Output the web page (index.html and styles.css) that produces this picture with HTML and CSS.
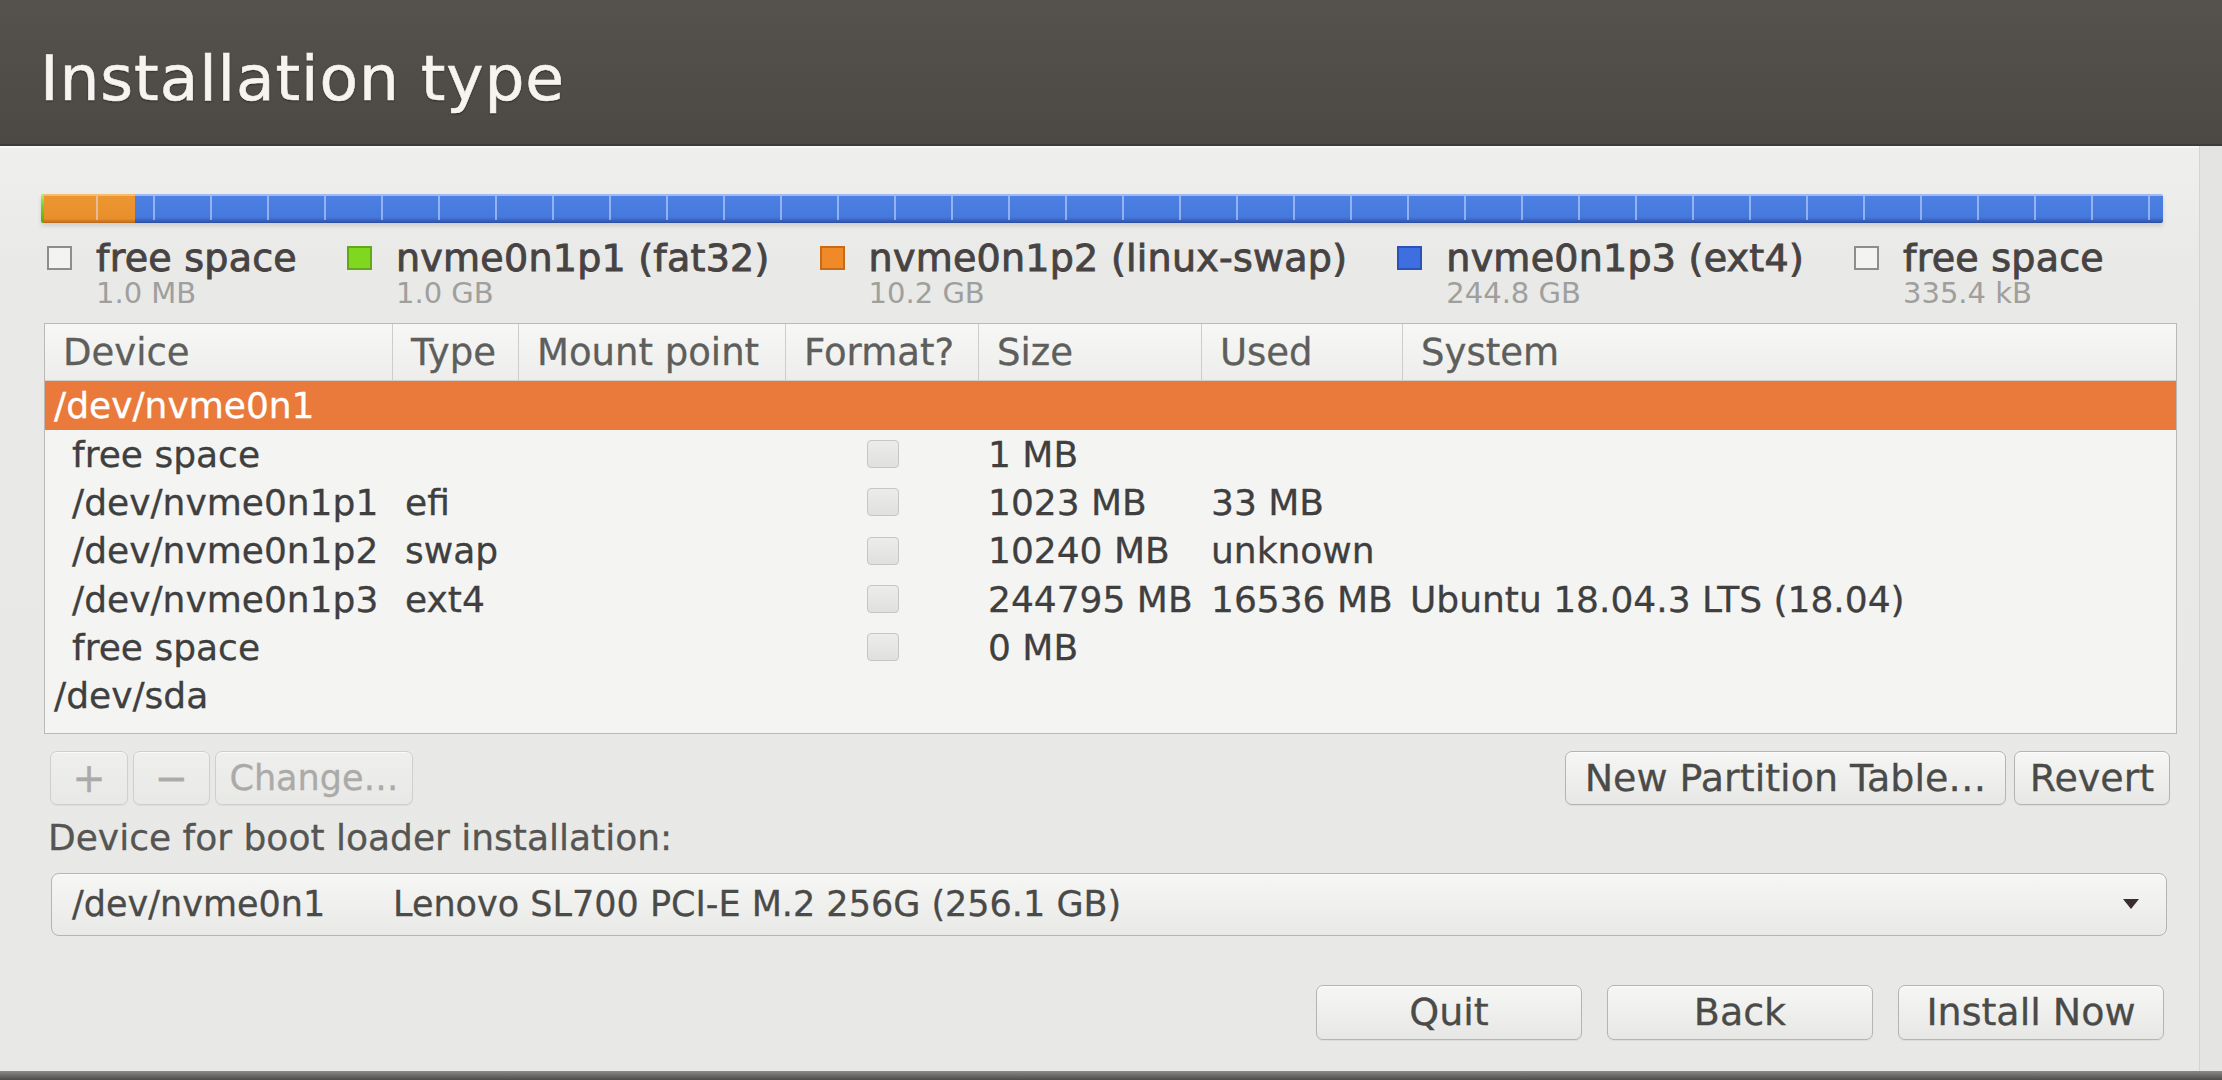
FILE: index.html
```html
<!DOCTYPE html>
<html lang="en">
<head>
<meta charset="utf-8">
<title>Installation type</title>
<link rel="stylesheet" href="styles.css">
</head>
<body>
<div class="page">
  <header class="titlebar"><h1 class="title">Installation type</h1></header>
  <div class="main">
    <section class="window">
      <div class="partbar">
        <div class="seg seg-efi"></div>
        <div class="seg seg-swap"></div>
        <div class="seg seg-root"></div>
      </div>

      <div class="legend">
        <div class="legend-item">
          <span class="swatch swatch-free"></span>
          <div class="legend-text"><span class="legend-name">free space</span><span class="legend-size">1.0 MB</span></div>
        </div>
        <div class="legend-item">
          <span class="swatch swatch-efi"></span>
          <div class="legend-text"><span class="legend-name">nvme0n1p1 (fat32)</span><span class="legend-size">1.0 GB</span></div>
        </div>
        <div class="legend-item">
          <span class="swatch swatch-swap"></span>
          <div class="legend-text"><span class="legend-name">nvme0n1p2 (linux-swap)</span><span class="legend-size">10.2 GB</span></div>
        </div>
        <div class="legend-item">
          <span class="swatch swatch-root"></span>
          <div class="legend-text"><span class="legend-name">nvme0n1p3 (ext4)</span><span class="legend-size">244.8 GB</span></div>
        </div>
        <div class="legend-item">
          <span class="swatch swatch-free"></span>
          <div class="legend-text"><span class="legend-name">free space</span><span class="legend-size">335.4 kB</span></div>
        </div>
      </div>

      <div class="tree">
        <div class="tree-head">
          <div class="th">Device</div>
          <div class="th">Type</div>
          <div class="th">Mount point</div>
          <div class="th">Format?</div>
          <div class="th">Size</div>
          <div class="th">Used</div>
          <div class="th th-last">System</div>
        </div>
        <div class="tr tr-selected">
          <div class="td td-disk">/dev/nvme0n1</div>
          <div class="td"></div><div class="td"></div><div class="td"></div><div class="td"></div><div class="td"></div><div class="td"></div>
        </div>
        <div class="tr">
          <div class="td td-part">free space</div>
          <div class="td td-type"></div>
          <div class="td"></div>
          <div class="td td-check"><span class="check"></span></div>
          <div class="td td-num">1 MB</div>
          <div class="td td-num"></div>
          <div class="td td-sys"></div>
        </div>
        <div class="tr">
          <div class="td td-part">/dev/nvme0n1p1</div>
          <div class="td td-type">efi</div>
          <div class="td"></div>
          <div class="td td-check"><span class="check"></span></div>
          <div class="td td-num">1023 MB</div>
          <div class="td td-num">33 MB</div>
          <div class="td td-sys"></div>
        </div>
        <div class="tr">
          <div class="td td-part">/dev/nvme0n1p2</div>
          <div class="td td-type">swap</div>
          <div class="td"></div>
          <div class="td td-check"><span class="check"></span></div>
          <div class="td td-num">10240 MB</div>
          <div class="td td-num">unknown</div>
          <div class="td td-sys"></div>
        </div>
        <div class="tr">
          <div class="td td-part">/dev/nvme0n1p3</div>
          <div class="td td-type">ext4</div>
          <div class="td"></div>
          <div class="td td-check"><span class="check"></span></div>
          <div class="td td-num">244795 MB</div>
          <div class="td td-num">16536 MB</div>
          <div class="td td-sys">Ubuntu 18.04.3 LTS (18.04)</div>
        </div>
        <div class="tr">
          <div class="td td-part">free space</div>
          <div class="td td-type"></div>
          <div class="td"></div>
          <div class="td td-check"><span class="check"></span></div>
          <div class="td td-num">0 MB</div>
          <div class="td td-num"></div>
          <div class="td td-sys"></div>
        </div>
        <div class="tr">
          <div class="td td-disk">/dev/sda</div>
          <div class="td"></div><div class="td"></div><div class="td"></div><div class="td"></div><div class="td"></div><div class="td"></div>
        </div>
      </div>

      <div class="toolbar">
        <div class="btn-group">
          <button class="btn btn-disabled btn-plus">+</button>
          <button class="btn btn-disabled btn-minus">−</button>
          <button class="btn btn-disabled btn-change">Change…</button>
        </div>
        <div class="btn-group btn-group-right">
          <button class="btn btn-newtable">New Partition Table…</button>
          <button class="btn btn-revert">Revert</button>
        </div>
      </div>

      <div class="boot-label">Device for boot loader installation:</div>

      <div class="combo">
        <span class="combo-dev">/dev/nvme0n1</span>
        <span class="combo-desc">Lenovo SL700 PCI-E M.2 256G (256.1 GB)</span>
        <svg class="combo-arrow" width="18" height="12" viewBox="0 0 18 12"><path d="M1 1 L17 1 L9 11 Z" fill="#3a2c31"/></svg>
      </div>

      <div class="nav">
        <button class="btn btn-nav">Quit</button>
        <button class="btn btn-nav">Back</button>
        <button class="btn btn-nav">Install Now</button>
      </div>
    </section>
    <div class="side"></div>
  </div>
  <div class="bottom-edge"></div>
</div>
</body>
</html>
```

FILE: styles.css
```css
* { box-sizing: border-box; }

html, body {
  margin: 0;
  padding: 0;
}

body {
  width: 2222px;
  height: 1080px;
  overflow: hidden;
  background: #e2e2e0;
  font-family: "DejaVu Sans", "Noto Sans", sans-serif;
  color: #3e3e3e;
}

.page {
  display: flex;
  flex-direction: column;
  height: 1080px;
}

/* ---------- title bar ---------- */
.titlebar {
  height: 146px;
  flex: none;
  display: flex;
  align-items: center;
  padding: 12px 0 0 40px;
  background: linear-gradient(#55514d, #4c4844);
  border-bottom: 2px solid #3e3b38;
}

.title {
  margin: 0;
  font-size: 63px;
  line-height: 1;
  font-weight: normal;
  letter-spacing: 0.9px;
  color: #f6f4f0;
  -webkit-text-stroke: 0.6px #f6f4f0;
  text-shadow: 0 1px 2px rgba(0, 0, 0, 0.6);
}

/* ---------- main area ---------- */
.main {
  flex: 1;
  display: flex;
  min-height: 0;
}

.window {
  width: 2200px;
  flex: none;
  display: flex;
  flex-direction: column;
  padding: 0 22px 0 44px;
  background: linear-gradient(#efefed, #e9e9e7 120px, #e8e8e6);
  box-shadow: inset 0 2px 0 #f7f7f5;
  border-right: 1px solid #d4d4d2;
}

.side {
  flex: 1;
  background: #e4e4e2;
}

.bottom-edge {
  height: 9px;
  flex: none;
  background: linear-gradient(#8a8987, #4e4c4a);
}

/* ---------- partition bar ---------- */
.partbar {
  position: relative;
  display: flex;
  height: 29px;
  margin: 48px 14px 0 -3px;
  border-radius: 2px;
  overflow: hidden;
  box-shadow: 0 3px 4px rgba(0, 0, 0, 0.12);
}

.partbar::after {
  content: "";
  position: absolute;
  inset: 2px 0 3px 0;
  background: repeating-linear-gradient(90deg, transparent 0 55px, rgba(220, 232, 255, 0.5) 55px 57px);
  pointer-events: none;
}

.seg { height: 100%; }

.seg-efi {
  width: 3px;
  background: linear-gradient(#b4ef6a, #7cd02a 40%, #5ea616);
}

.seg-swap {
  width: 91px;
  background: linear-gradient(#f5bc6e 0 2px, #ec9632 2px, #e88f2b 85%, #b8681c);
}

.seg-root {
  flex: 1;
  background: linear-gradient(#9dbaf3 0 2px, #4d80e2 2px, #4679dd 80%, #2c4fa6);
}

/* ---------- legend ---------- */
.legend {
  display: flex;
  gap: 50px;
  margin: 15px 0 0 3px;
}

.legend-item {
  display: flex;
  gap: 24px;
  align-items: flex-start;
}

.swatch {
  width: 25px;
  height: 24px;
  margin-top: 8px;
  flex: none;
  border: 2px solid #8a8a88;
}

.swatch-free { background: #f3f3f1; border-color: #8d8d8b; }
.swatch-efi { background: #7fd81f; border-color: #62a818; }
.swatch-swap { background: #f08a28; border-color: #c86a16; }
.swatch-root { background: #3e6ee0; border-color: #2a52b8; }

.legend-text {
  display: flex;
  flex-direction: column;
}

.legend-name {
  font-size: 38px;
  line-height: 40px;
  letter-spacing: 0.25px;
  color: #474343;
  -webkit-text-stroke: 0.9px #474343;
  white-space: nowrap;
}

.legend-size {
  font-size: 29px;
  line-height: 30px;
  color: #9f9f9d;
  white-space: nowrap;
}

/* ---------- tree view ---------- */
.tree {
  margin-top: 15px;
  border: 1px solid #b9b9b7;
  background: #f4f4f2;
  padding-bottom: 13px;
}

.tree-head,
.tr {
  display: grid;
  grid-template-columns: 348px 126px 267px 193px 223px 201px 1fr;
}

.tree-head {
  height: 57px;
  background: linear-gradient(#f7f7f5, #ededeb);
  border-bottom: 1px solid #cfcfcd;
}

.th {
  display: flex;
  align-items: center;
  padding-left: 18px;
  font-size: 37px;
  color: #5e5e5c;
  -webkit-text-stroke: 0.3px #5e5e5c;
  border-right: 1px solid #cdcdcb;
  white-space: nowrap;
}

.th-last { border-right: 0; }

.tr {
  height: 48.3px;
  align-items: center;
  font-size: 36px;
  color: #3f3f3f;
  -webkit-text-stroke: 0.3px #3f3f3f;
}

.tr-selected {
  height: 49px;
  background: #e97a3b;
  color: #ffffff;
  -webkit-text-stroke: 0.3px #ffffff;
}

.td {
  white-space: nowrap;
  padding-left: 9px;
}

.td-disk { padding-left: 9px; }
.td-part { padding-left: 27px; }
.td-type { padding-left: 12px; }
.td-sys { padding-left: 7px; }

.td-check {
  display: flex;
  justify-content: center;
  padding-left: 0;
}

.check {
  width: 32px;
  height: 28px;
  border: 1px solid #c6c6c4;
  border-radius: 4px;
  background: linear-gradient(#ececea, #e0e0de);
}

/* ---------- buttons ---------- */
.btn {
  height: 54px;
  padding: 0;
  border: 1px solid #b4b4b2;
  border-radius: 7px;
  background: linear-gradient(#f6f6f4, #e7e7e5);
  box-shadow: inset 0 1px 0 rgba(255, 255, 255, 0.7), 0 1px 1px rgba(0, 0, 0, 0.06);
  font-family: "DejaVu Sans", "Noto Sans", sans-serif;
  font-size: 38px;
  color: #4a4a48;
  -webkit-text-stroke: 0.3px #4a4a48;
  display: flex;
  align-items: center;
  justify-content: center;
  white-space: nowrap;
}

.btn-disabled {
  color: #abaaa8;
  -webkit-text-stroke: 0.3px #abaaa8;
  border-color: #cfcfcd;
  background: linear-gradient(#efefed, #e8e8e6);
}

.toolbar {
  display: flex;
  justify-content: space-between;
  margin: 17px 7px 0 6px;
}

.btn-group {
  display: flex;
  gap: 5px;
}

.btn-group-right { gap: 8px; }

.btn-plus { width: 78px; font-size: 40px; }
.btn-minus { width: 77px; font-size: 40px; }
.btn-change { width: 198px; font-size: 35px; }
.btn-newtable { width: 441px; }
.btn-revert { width: 156px; }

.boot-label {
  margin: 14px 0 0 4px;
  font-size: 36px;
  line-height: 38px;
  color: #555553;
  -webkit-text-stroke: 0.3px #555553;
}

/* ---------- combo ---------- */
.combo {
  display: flex;
  align-items: center;
  height: 63px;
  margin: 16px 10px 0 7px;
  padding: 0 26px 0 20px;
  border: 1px solid #b4b4b2;
  border-radius: 8px;
  background: linear-gradient(#f6f6f4, #e9e9e7);
  box-shadow: inset 0 1px 0 rgba(255, 255, 255, 0.7);
  font-size: 35px;
  color: #4a4a48;
  -webkit-text-stroke: 0.3px #4a4a48;
  white-space: nowrap;
}

.combo-dev { width: 321px; flex: none; }
.combo-desc { flex: 1; }
.combo-arrow { flex: none; }

/* ---------- navigation ---------- */
.nav {
  display: flex;
  justify-content: flex-end;
  gap: 25px;
  margin: 49px 13px 0 0;
}

.btn-nav {
  width: 266px;
  height: 55px;
  font-size: 38px;
}
```
